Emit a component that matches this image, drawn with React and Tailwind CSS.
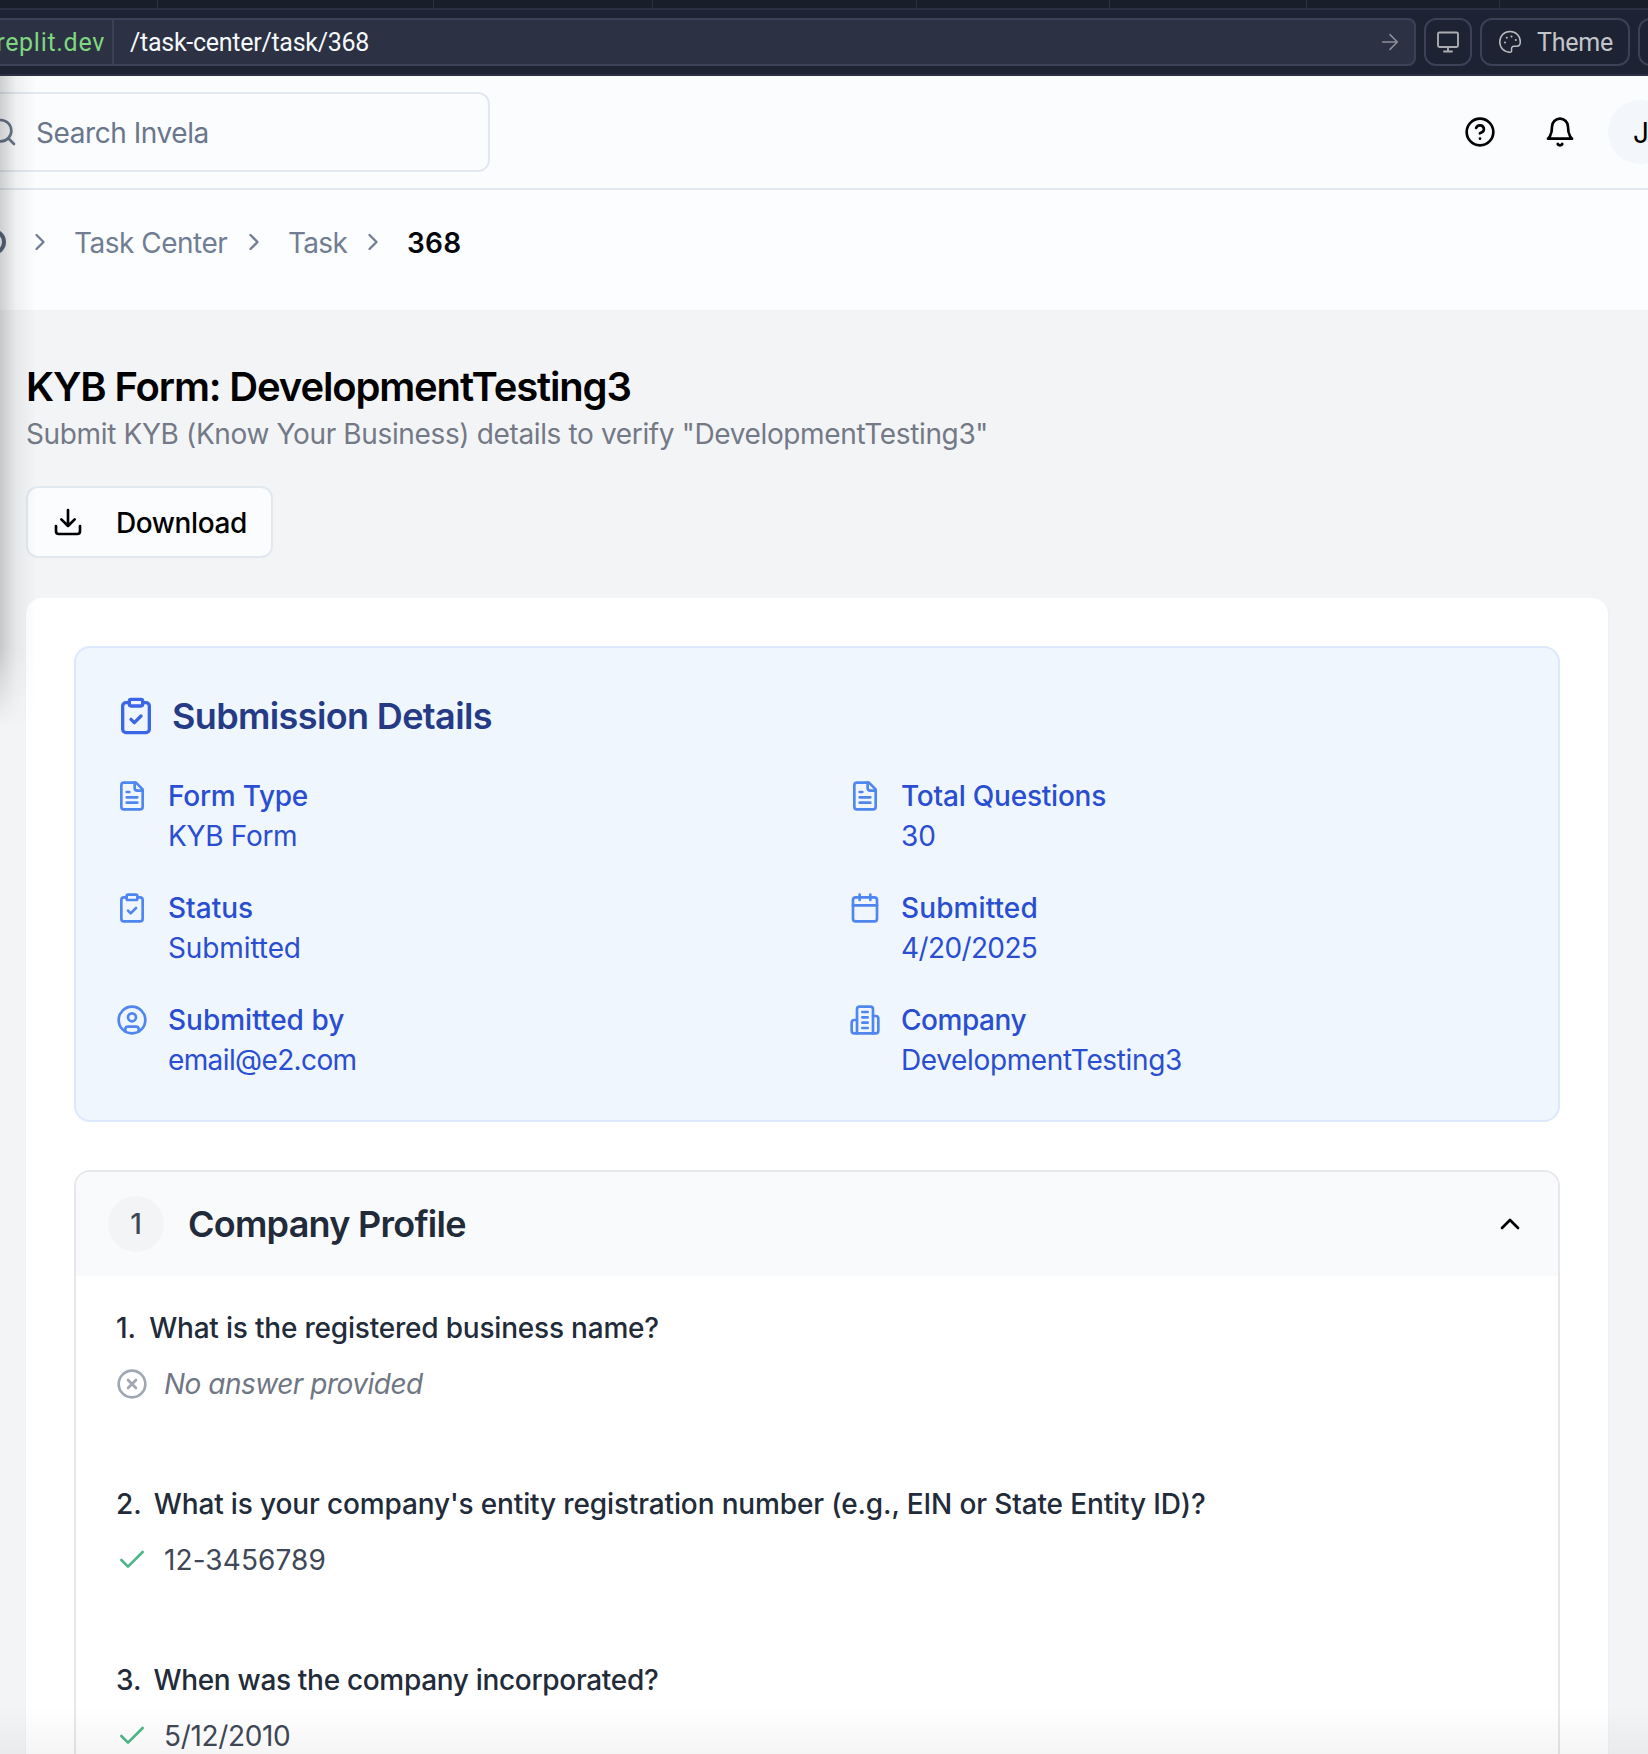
const stroke = {
  fill: "none",
  stroke: "currentColor",
  strokeLinecap: "round",
  strokeLinejoin: "round",
};

function Icon({ className, width = 2, children }) {
  return (
    <svg viewBox="0 0 24 24" className={className} strokeWidth={width} {...stroke}>
      {children}
    </svg>
  );
}

const FileText = (p) => (
  <Icon {...p}>
    <path d="M15 2H6a2 2 0 0 0-2 2v16a2 2 0 0 0 2 2h12a2 2 0 0 0 2-2V7Z" />
    <path d="M14 2v4a2 2 0 0 0 2 2h4" />
    <path d="M10 9H8M16 13H8M16 17H8" />
  </Icon>
);
const ClipboardCheck = (p) => (
  <Icon {...p}>
    <rect width="8" height="4" x="8" y="2" rx="1" />
    <path d="M16 4h2a2 2 0 0 1 2 2v14a2 2 0 0 1-2 2H6a2 2 0 0 1-2-2V6a2 2 0 0 1 2-2h2" />
    <path d="m9 14 2 2 4-4" />
  </Icon>
);
const Calendar = (p) => (
  <Icon {...p}>
    <path d="M8 2v4M16 2v4" />
    <rect width="18" height="18" x="3" y="4" rx="2" />
    <path d="M3 10h18" />
  </Icon>
);
const CircleUser = (p) => (
  <Icon {...p}>
    <circle cx="12" cy="12" r="10" />
    <circle cx="12" cy="10" r="3" />
    <path d="M7 20.662V19a2 2 0 0 1 2-2h6a2 2 0 0 1 2 2v1.662" />
  </Icon>
);
const Building = (p) => (
  <Icon {...p}>
    <path d="M6 22V4a2 2 0 0 1 2-2h8a2 2 0 0 1 2 2v18Z" />
    <path d="M6 12H4a2 2 0 0 0-2 2v6a2 2 0 0 0 2 2h2" />
    <path d="M18 9h2a2 2 0 0 1 2 2v9a2 2 0 0 1-2 2h-2" />
    <path d="M10 6h4M10 10h4M10 14h4M10 18h4" />
  </Icon>
);
const Download = (p) => (
  <Icon {...p}>
    <path d="M21 15v4a2 2 0 0 1-2 2H5a2 2 0 0 1-2-2v-4" />
    <path d="m7 10 5 5 5-5M12 15V3" />
  </Icon>
);
const Help = (p) => (
  <Icon {...p}>
    <circle cx="12" cy="12" r="10" />
    <path d="M9.09 9a3 3 0 0 1 5.83 1c0 2-3 3-3 3M12 17h.01" />
  </Icon>
);
const Bell = (p) => (
  <Icon {...p}>
    <path d="M6 8a6 6 0 0 1 12 0c0 7 3 9 3 9H3s3-2 3-9" />
    <path d="M10.3 21a1.94 1.94 0 0 0 3.4 0" />
  </Icon>
);
const Search = (p) => (
  <Icon {...p}>
    <circle cx="11" cy="11" r="8" />
    <path d="m21 21-4.3-4.3" />
  </Icon>
);
const CircleX = (p) => (
  <Icon {...p}>
    <circle cx="12" cy="12" r="10" />
    <path d="m15 9-6 6M9 9l6 6" />
  </Icon>
);
const Check = (p) => (
  <Icon {...p}>
    <path d="M20 6 9 17l-5-5" />
  </Icon>
);
const ChevronUp = (p) => (
  <Icon {...p}>
    <path d="m18 15-6-6-6 6" />
  </Icon>
);
const ChevronRight = (p) => (
  <Icon {...p}>
    <path d="m9 18 6-6-6-6" />
  </Icon>
);
const ArrowRight = (p) => (
  <Icon {...p}>
    <path d="M4 12h16M12 4l8 8-8 8" />
  </Icon>
);
const Monitor = (p) => (
  <Icon {...p}>
    <rect x="2" y="2.500" width="20" height="14.500" rx="1.500" />
    <path d="M12 17v4.500M8 21.500h8" />
  </Icon>
);
const Palette = (p) => (
  <Icon {...p}>
    <path d="M12 1.500C6 1.500 1.800 6.200 1.800 12S6.200 22.200 12 22.200c1.200 0 1.800-.7 1.600-1.900-.4-2.600.2-4.100 2.600-4.100h2.500c2.200 0 3.600-1.600 3.600-4.200C22.300 6 18 1.500 12 1.500Z" />
    <path d="M7 12.500h.01M8.800 7.800h.01M13.500 6.500h.01M17.800 10h.01" strokeWidth="2" />
  </Icon>
);

const tabs = [
  "w-[158px]",
  "w-[276px]",
  "w-[219px]",
  "w-[264px]",
  "w-[193px]",
  "w-[197px]",
  "w-[193px]",
];

const details = [
  { Glyph: FileText, label: "Form Type", value: "KYB Form", labelFit: "tracking-[-0.25px]", fit: "tracking-[-0.3px]" },
  { Glyph: FileText, label: "Total Questions", value: "30", labelFit: "tracking-[-0.22px]", fit: "" },
  { Glyph: ClipboardCheck, label: "Status", value: "Submitted", labelFit: "", fit: "tracking-[-0.1px]" },
  { Glyph: Calendar, label: "Submitted", value: "4/20/2025", labelFit: "tracking-[0.1px]", fit: "tracking-[-0.62px]" },
  { Glyph: CircleUser, label: "Submitted by", value: "email@e2.com", labelFit: "", fit: "tracking-[-0.62px]" },
  { Glyph: Building, label: "Company", value: "DevelopmentTesting3", labelFit: "tracking-[-0.45px]", fit: "tracking-[-0.36px]" },
];

const questions = [
  { n: "1.", text: "What is the registered business name?", fit: "pl-px tracking-[-0.2px]" },
  {
    n: "2.",
    text: "What is your company's entity registration number (e.g., EIN or State Entity ID)?",
    fit: "tracking-[-0.14px]",
    answer: "12-3456789",
    answerFit: "tracking-[0.1px]",
  },
  {
    n: "3.",
    text: "When was the company incorporated?",
    fit: "tracking-[-0.32px]",
    answer: "5/12/2010",
    answerFit: "tracking-[-0.35px]",
  },
];

function BrowserBar() {
  return (
    <div className="h-[76px] border-b-2 border-[#2b3043] bg-[#1d2332] font-[Roboto,sans-serif]">
      <div className="flex h-[10px] border-b-2 border-[#2b3043] bg-[#181e2a]">
        {tabs.map((w, i) => (
          <div key={i} className={`${w} shrink-0 border-r border-[#2b3043]`} />
        ))}
      </div>
      <div className="mt-2 flex h-12 gap-2">
        <div className="flex w-[1416px] shrink-0 items-center rounded-r-lg border-2 border-l-0 border-[#3c4158] bg-[#2c3144]">
          <div className="flex h-full w-[114px] shrink-0 items-center justify-end border-r-2 border-[#3c4158] pt-0.5 pr-[7px] text-[25px] tracking-[0.7px] whitespace-nowrap text-[#7fd77f]">
            replit.dev
          </div>
          <div className="ml-4 flex-1 pt-0.5 text-[25px] tracking-[-0.27px] text-[#f5f9fc]">
            /task-center/task/368
          </div>
          <ArrowRight className="mr-[13px] size-[22px] text-[#8b9096]" width={1.7} />
        </div>
        <div className="flex w-12 shrink-0 items-center justify-center rounded-xl border-2 border-[#3c4158]">
          <Monitor className="size-6 text-[#a9adb0]" width={1.9} />
        </div>
        <div className="flex w-[150px] shrink-0 items-center rounded-xl border-2 border-[#3c4158] pl-4 text-[25px] text-[#c2c5c9]">
          <Palette className="size-6 text-[#b9bdc0]" width={1.5} />
          <span className="ml-[15px] pt-0.5 tracking-[-0.2px]">Theme</span>
        </div>
        <div className="w-12 shrink-0 rounded-xl border-2 border-[#3c4158]" />
      </div>
    </div>
  );
}

function Header() {
  return (
    <header className="flex h-[114px] items-center border-b-2 border-[#e1e8ef] bg-[#fbfcfe]">
      <div className="-ml-5 flex h-20 w-[510px] shrink-0 items-center rounded-r-xl border-2 border-[#e1e8ef] text-[#69768c]">
        <Search className="ml-1 size-8 shrink-0" />
        <span className="ml-[18px] pt-0.5 text-[28px] tracking-[-0.43px]">Search Invela</span>
      </div>
      <div className="ml-auto flex shrink-0 items-center text-black">
        <Help className="size-8" />
        <Bell className="ml-12 size-8" />
        <div className="-mr-6 ml-8 flex size-16 items-center justify-center rounded-full bg-[#f3f6fa] pt-0.5 text-[28px]">
          <span className="ml-0.5">J</span>
        </div>
      </div>
    </header>
  );
}

function Breadcrumbs() {
  return (
    <nav className="flex h-[120px] items-center bg-[#fbfdfe] pb-4 text-[28px] text-[#717d92]">
      <div className="-ml-5 size-[26px] shrink-0 rounded-full border-4 border-[#5b6880]" />
      <ChevronRight className="ml-5 size-7 shrink-0" width={2} />
      <span className="ml-5 w-[155px] pt-px tracking-[-0.5px] whitespace-nowrap">Task Center</span>
      <ChevronRight className="ml-[11px] size-7 shrink-0" width={2} />
      <span className="ml-5 w-[60px] pt-px tracking-[-0.7px]">Task</span>
      <ChevronRight className="ml-[11px] size-7 shrink-0" width={2} />
      <span className="ml-5 pt-px font-semibold tracking-[0.3px] text-[#05070d]">368</span>
    </nav>
  );
}

function SubmissionDetails() {
  return (
    <section className="rounded-2xl border-2 border-[#dce8fc] bg-[#eff6fe] p-10">
      <h2 className="flex h-14 items-center gap-4 text-[36px] font-semibold tracking-[-0.63px] text-[#263b86]">
        <ClipboardCheck className="size-10 text-[#3b66e6]" />
        Submission Details
      </h2>
      <dl className="mt-8 grid grid-cols-2 gap-x-16 gap-y-8 text-[28px] leading-10 text-[#2a4ed1]">
        {details.map(({ Glyph, label, value, labelFit, fit }) => (
          <div key={label} className="flex gap-5">
            <Glyph className="mt-1 size-8 shrink-0 text-[#4f86f0]" />
            <div>
              <dt className={`font-medium ${labelFit}`}>{label}</dt>
              <dd className={fit}>{value}</dd>
            </div>
          </div>
        ))}
      </dl>
    </section>
  );
}

function CompanyProfile() {
  return (
    <section className="mt-12 h-[700px] overflow-hidden rounded-2xl border-2 border-[#e5e7eb] bg-white">
      <div className="flex h-[104px] items-center bg-[#f9fafc] pr-8 pl-8">
        <div className="flex size-14 items-center justify-center rounded-full bg-[#f3f4f6] text-[28px] font-medium text-[#3e4754]">
          1
        </div>
        <h2 className="ml-6 text-[36px] font-semibold tracking-[-0.75px] text-[#222b39]">Company Profile</h2>
        <ChevronUp className="ml-auto size-8 text-black" />
      </div>
      <ol className="px-10 pt-8 text-[28px] leading-10">
        {questions.map(({ n, text, fit, answer, answerFit }) => (
          <li key={n} className="h-44">
            <p className="flex gap-3 font-medium text-[#222b39]">
              <span>{n}</span>
              <span className={fit}>{text}</span>
            </p>
            <p className="mt-4 flex items-center gap-4">
              {answer ? (
                <>
                  <Check className="size-8 text-[#50b788]" />
                  <span className={`text-[#3f4856] ${answerFit}`}>{answer}</span>
                </>
              ) : (
                <>
                  <CircleX className="size-8 text-[#a0a7b3]" />
                  <span className="tracking-[-0.5px] text-[#6f7684] italic">No answer provided</span>
                </>
              )}
            </p>
          </li>
        ))}
      </ol>
    </section>
  );
}

export default function App() {
  return (
    <div className="relative h-[1754px] w-[1648px] overflow-hidden bg-[#f3f4f6] font-[Inter,sans-serif]">
      <BrowserBar />
      <Header />
      <Breadcrumbs />
      <main className="pt-[49px] pr-10 pl-[26px]">
        <h1 className="h-[55px] text-[40px] leading-[56px] font-semibold tracking-[-1.15px] whitespace-nowrap text-black">
          KYB Form: DevelopmentTesting3
        </h1>
        <p className="h-[72px] text-[28px] leading-10 tracking-[-0.36px] text-[#737986]">
          Submit KYB (Know Your Business) details to verify "DevelopmentTesting3"
        </p>
        <button className="flex h-[72px] w-[247px] items-center rounded-xl border-2 border-[#e1e8ef] bg-[#fbfcfe] pl-6 text-[28px] font-medium text-black">
          <Download className="size-8" />
          <span className="ml-8 pt-px tracking-[-0.42px]">Download</span>
        </button>
        <div className="mt-10 rounded-2xl bg-white p-12 shadow-xs">
          <SubmissionDetails />
          <CompanyProfile />
        </div>
      </main>
      <div className="pointer-events-none absolute top-[76px] left-0 h-[650px] w-9 bg-linear-to-r from-black/18 via-black/5 via-45% to-transparent mask-b-from-88%" />
      <div className="pointer-events-none absolute inset-x-0 bottom-0 h-12 bg-linear-to-t from-black/4 to-transparent" />
    </div>
  );
}
